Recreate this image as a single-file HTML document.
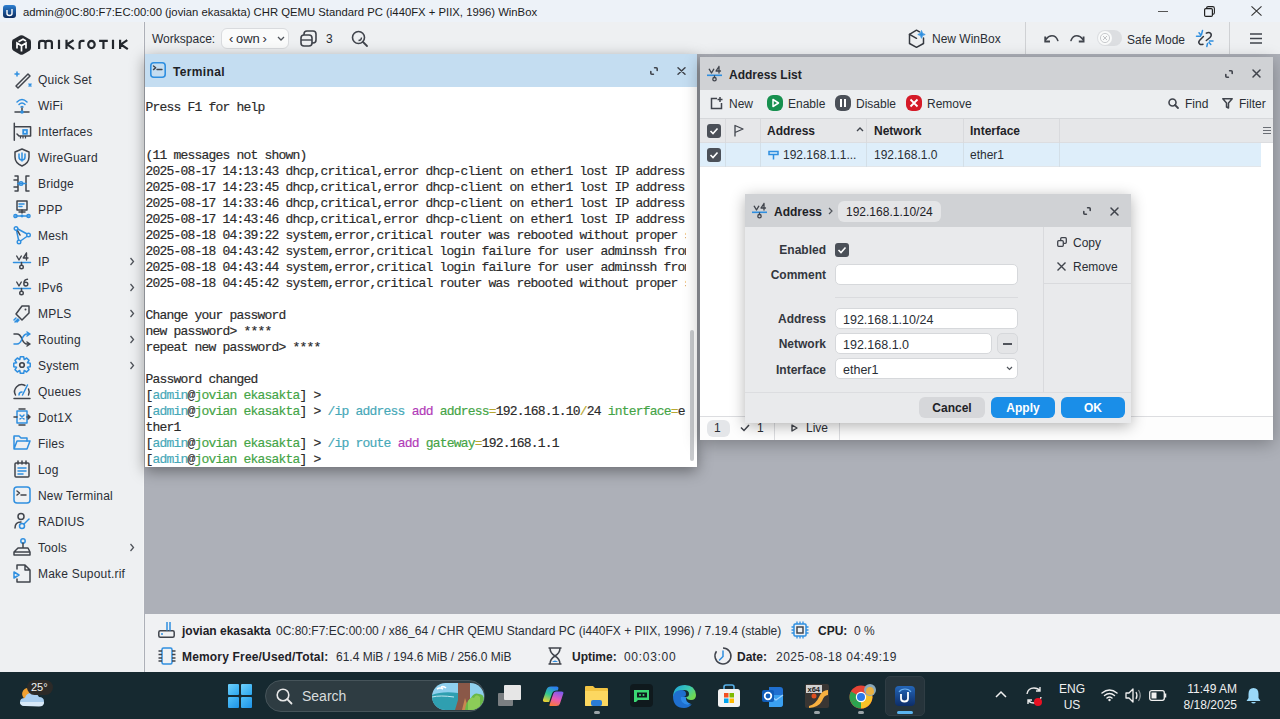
<!DOCTYPE html>
<html><head><meta charset="utf-8">
<style>
*{margin:0;padding:0;box-sizing:border-box}
html,body{width:1280px;height:719px;overflow:hidden;background:#adb0b8;font-family:"Liberation Sans",sans-serif;color:#23272e}
.a{position:absolute}
.t{position:absolute;white-space:nowrap;line-height:12px;font-size:12px;height:12px}
.b{font-weight:bold}
svg{position:absolute;overflow:visible}
.ic{fill:none;stroke:#40444c;stroke-width:1.5;stroke-linecap:round;stroke-linejoin:round}
.bl{fill:none;stroke:#2f8fe0;stroke-width:1.5;stroke-linecap:round;stroke-linejoin:round}
.mono{font-family:"Liberation Mono",monospace;font-size:13px;letter-spacing:-0.8px;line-height:16px;white-space:pre;color:#2b2b2b;-webkit-text-stroke:0.18px currentColor}
</style></head><body>

<div class="a" style="left:0;top:0;width:1280px;height:22px;background:#edf2f8"></div>
<div class="a" style="left:3px;top:5px;width:13px;height:13px;border-radius:3px;background:linear-gradient(#2c7fd2,#0c2a5c)"></div>
<svg style="left:3px;top:5px" width="13" height="13"><path d="M4 5v3.5q0 2 2.5 2q2.5 0 2.5-2V4" stroke="#fff" stroke-width="1.4" fill="none"/></svg>
<div class="t" style="left:23px;top:6px;font-size:11.3px;color:#1c1c1c">admin@0C:80:F7:EC:00:00 (jovian ekasakta) CHR QEMU Standard PC (i440FX + PIIX, 1996) WinBox</div>
<div class="a" style="left:1158px;top:11px;width:10px;height:1px;background:#555"></div>
<svg style="left:1204px;top:6px" width="11" height="11"><rect x="0.6" y="2.6" width="7.8" height="7.8" rx="1.2" fill="none" stroke="#222" stroke-width="1.2"/><path d="M2.6 2.2q0-1.6 1.6-1.6h4.4q1.8 0 1.8 1.8v4.4q0 1.6-1.6 1.6" fill="none" stroke="#222" stroke-width="1.1"/></svg>
<svg style="left:1251px;top:6px" width="11" height="10"><path d="M0.5 0.3l10 9.4M10.5 0.3l-10 9.4" stroke="#333" stroke-width="1.1"/></svg>

<div class="a" style="left:0;top:22px;width:144px;height:650px;background:#eef0f2;border-right:1px solid #f3f4f5"></div>
<svg style="left:12px;top:35px" width="19" height="20" viewBox="0 0 19 20"><path d="M8 0.6Q9.5 -0.2 11 0.6L17.5 4.3Q19 5.2 19 6.9V13.1Q19 14.8 17.5 15.7L11 19.4Q9.5 20.2 8 19.4L1.5 15.7Q0 14.8 0 13.1V6.9Q0 5.2 1.5 4.3z" fill="#262a30"/><path d="M5 13.5V8L9.5 10.8L14 8V13.5M9.5 10.8V16.5M6.5 6.8L11 4.3L14 6" fill="none" stroke="#fff" stroke-width="1.7" stroke-linejoin="miter"/></svg>
<svg style="left:35px;top:36px" width="96" height="16"><path d="M4.1 13.1V7Q4.1 4.85 6.5 4.85H8.1Q10.5 4.85 10.5 7V13.1M10.5 7Q10.5 4.85 12.9 4.85H14.5Q16.9 4.85 16.9 7V13.1M24 3.75V13.1M31.5 3.75V13.1M38.6 4.2L32.2 8.4L38.9 13.1M44.6 13.1V7.3Q44.6 4.85 47.2 4.85H49.5M64.1 4.85H72.8M68.45 4.85V13.1M78 3.75V13.1M85.1 3.75V13.1M92.3 4.2L85.9 8.4L92.8 13.1" fill="none" stroke="#23272d" stroke-width="2.2"/><ellipse cx="56.45" cy="8.45" rx="3.25" ry="3.6" fill="none" stroke="#23272d" stroke-width="2.2"/></svg>
<svg style="left:13px;top:70px" width="18" height="18"><path class="ic" d="M3 17L15 5l2 2L5 19z" transform="translate(0,-1)"/><path class="bl" d="M4 2v4M2 4h4" stroke-width="1.6"/><path class="bl" d="M16 14l2 2M18 14l-2 2" stroke-width="1.4"/></svg>
<div class="t" style="left:38px;top:74px;color:#2a2e35;letter-spacing:0.2px">Quick Set</div>
<svg style="left:13px;top:96px" width="18" height="18"><path class="bl" d="M4 6q5-5 10 0M6 8.5q3-3 6 0M8 11q1-1 2 0"/><path class="ic" d="M9 12v4M2 16h14"/><circle cx="9" cy="16" r="1.8" fill="#2f8fe0"/></svg>
<div class="t" style="left:38px;top:100px;color:#2a2e35;letter-spacing:0.2px">WiFi</div>
<svg style="left:13px;top:122px" width="18" height="18"><path class="ic" d="M1.3 1.2V18.3M1.3 4.7H17.6V14H6L4 12" stroke-linecap="butt"/><path d="M7.5 14v2.5M10 14v2.5M12.5 14v2.5" stroke="#40444c" stroke-width="1.2"/><rect x="9.3" y="7.1" width="5.5" height="5.6" fill="#2f8fe0"/><rect x="11" y="8.8" width="2.1" height="2.2" fill="#bfe0fa"/></svg>
<div class="t" style="left:38px;top:126px;color:#2a2e35;letter-spacing:0.2px">Interfaces</div>
<svg style="left:13px;top:148px" width="18" height="18"><path class="ic" d="M9 1l7 3v5q0 6-7 9q-7-3-7-9V4z"/><path class="bl" d="M6 6v3q0 3 3 3q3 0 3-3V6M9 5v8"/></svg>
<div class="t" style="left:38px;top:152px;color:#2a2e35;letter-spacing:0.2px">WireGuard</div>
<svg style="left:13px;top:174px" width="18" height="18"><path class="ic" d="M2 2h3v15H2M16 2h-3v15h3M1 6h4M1 13h4"/><path class="bl" d="M5 9.5h8"/><circle cx="8" cy="9.5" r="1.8" fill="none" stroke="#2f8fe0" stroke-width="1.4"/></svg>
<div class="t" style="left:38px;top:178px;color:#2a2e35;letter-spacing:0.2px">Bridge</div>
<svg style="left:13px;top:200px" width="18" height="18"><rect class="ic" x="4" y="1" width="10" height="9"/><path class="bl" d="M6 4h5M6 6.5h3"/><path class="ic" d="M9 10v3M6 12h6"/><path class="bl" d="M2 16h14"/><circle cx="2.5" cy="16" r="1.6" fill="none" stroke="#2f8fe0" stroke-width="1.4"/><circle cx="15.5" cy="16" r="1.6" fill="none" stroke="#2f8fe0" stroke-width="1.4"/><circle cx="9" cy="16" r="1.4" fill="#2f8fe0"/></svg>
<div class="t" style="left:38px;top:204px;color:#2a2e35;letter-spacing:0.2px">PPP</div>
<svg style="left:13px;top:226px" width="18" height="18"><path class="bl" d="M3 2l13 7L6 16z"/><path class="ic" d="M3 2l4 7"/><circle cx="3" cy="2.5" r="1.8" fill="#eef0f2" stroke="#2f8fe0" stroke-width="1.4"/><circle cx="15.5" cy="9" r="1.8" fill="#eef0f2" stroke="#2f8fe0" stroke-width="1.4"/><circle cx="6" cy="16" r="1.8" fill="#eef0f2" stroke="#2f8fe0" stroke-width="1.4"/></svg>
<div class="t" style="left:38px;top:230px;color:#2a2e35;letter-spacing:0.2px">Mesh</div>
<svg style="left:13px;top:252px" width="18" height="18"><path d="M3.7 4L6 8L8.3 4M13.5 1V8M13.5 1L10.3 6H15" fill="none" stroke="#40444c" stroke-width="1.4" stroke-linejoin="round" stroke-linecap="round"/><path class="bl" d="M0.5 10.5h17"/><path class="ic" d="M8.5 10.5v2.5"/><circle cx="8.5" cy="15" r="1.8" fill="none" stroke="#40444c" stroke-width="1.4"/></svg>
<div class="t" style="left:38px;top:256px;color:#2a2e35;letter-spacing:0.2px">IP</div>
<svg style="left:129px;top:257px" width="6" height="9"><path d="M1.5 1l3 3.5l-3 3.5" fill="none" stroke="#50545b" stroke-width="1.3"/></svg>
<svg style="left:13px;top:278px" width="18" height="18"><path d="M3.7 4L6 8L8.3 4M14.5 1.3Q11 1.5 10.8 5.5Q10.8 8 12.8 8Q14.8 8 14.8 6Q14.8 4.2 12.8 4.2Q11.3 4.2 10.9 5.3" fill="none" stroke="#40444c" stroke-width="1.4" stroke-linejoin="round" stroke-linecap="round"/><path class="bl" d="M0.5 10.5h17"/><path class="ic" d="M8.5 10.5v2.5"/><circle cx="8.5" cy="15" r="1.8" fill="none" stroke="#40444c" stroke-width="1.4"/></svg>
<div class="t" style="left:38px;top:282px;color:#2a2e35;letter-spacing:0.2px">IPv6</div>
<svg style="left:129px;top:283px" width="6" height="9"><path d="M1.5 1l3 3.5l-3 3.5" fill="none" stroke="#50545b" stroke-width="1.3"/></svg>
<svg style="left:13px;top:304px" width="18" height="18"><path class="ic" d="M9 2h7v7l-7 7l-6-6z"/><circle cx="12.5" cy="5.5" r="1" fill="#40444c"/><path class="bl" d="M1 16l2-2M2 18l3-3M4 18l2-2"/></svg>
<div class="t" style="left:38px;top:308px;color:#2a2e35;letter-spacing:0.2px">MPLS</div>
<svg style="left:129px;top:309px" width="6" height="9"><path d="M1.5 1l3 3.5l-3 3.5" fill="none" stroke="#50545b" stroke-width="1.3"/></svg>
<svg style="left:13px;top:330px" width="18" height="18"><path class="ic" d="M1 4h3q3 0 5 5q2 5 5 5h3M14 12l3 2l-3 2"/><path class="bl" d="M1 14h3q3 0 5-5q2-5 5-5h3M14 2l3 2l-3 2"/></svg>
<div class="t" style="left:38px;top:334px;color:#2a2e35;letter-spacing:0.2px">Routing</div>
<svg style="left:129px;top:335px" width="6" height="9"><path d="M1.5 1l3 3.5l-3 3.5" fill="none" stroke="#50545b" stroke-width="1.3"/></svg>
<svg style="left:13px;top:356px" width="18" height="18"><path class="bl" d="M14.46 6.76L17.23 7.33L17.23 10.67L14.46 11.24L14.44 11.27L16.00 13.64L13.64 16.00L11.27 14.44L11.24 14.46L10.67 17.23L7.33 17.23L6.76 14.46L6.73 14.44L4.36 16.00L2.00 13.64L3.56 11.27L3.54 11.24L0.77 10.67L0.77 7.33L3.54 6.76L3.56 6.73L2.00 4.36L4.36 2.00L6.73 3.56L6.76 3.54L7.33 0.77L10.67 0.77L11.24 3.54L11.27 3.56L13.64 2.00L16.00 4.36L14.44 6.73z"/><circle cx="9" cy="9" r="2.3" fill="none" stroke="#40444c" stroke-width="1.6"/></svg>
<div class="t" style="left:38px;top:360px;color:#2a2e35;letter-spacing:0.2px">System</div>
<svg style="left:129px;top:361px" width="6" height="9"><path d="M1.5 1l3 3.5l-3 3.5" fill="none" stroke="#50545b" stroke-width="1.3"/></svg>
<svg style="left:13px;top:382px" width="18" height="18"><path class="ic" d="M2.5 13A7 7 0 0 1 12 3.5M15.5 7A7 7 0 0 1 15.5 13M1 16.5h16"/><path class="bl" d="M14.5 3l-5 10M6 13q0-3 3-3"/></svg>
<div class="t" style="left:38px;top:386px;color:#2a2e35;letter-spacing:0.2px">Queues</div>
<svg style="left:13px;top:408px" width="18" height="18"><rect class="bl" x="4" y="3" width="10" height="12"/><path class="bl" d="M7 7l4 4M11 7l-4 4"/><path class="ic" d="M1 9h3M14 9h3M15 7l2 2l-2 2M6 1h6M6 17h6"/></svg>
<div class="t" style="left:38px;top:412px;color:#2a2e35;letter-spacing:0.2px">Dot1X</div>
<svg style="left:13px;top:434px" width="18" height="18"><path class="bl" d="M1 4v11h13l3-8H4L1 15"/><path class="bl" d="M1 4V2h5l2 2h6v3"/></svg>
<div class="t" style="left:38px;top:438px;color:#2a2e35;letter-spacing:0.2px">Files</div>
<svg style="left:13px;top:460px" width="18" height="18"><rect class="ic" x="2" y="3" width="14" height="14" rx="1"/><path class="ic" d="M5 1v3M9 1v3M13 1v3"/><path class="bl" d="M5 8h8M5 11h8M5 14h5"/></svg>
<div class="t" style="left:38px;top:464px;color:#2a2e35;letter-spacing:0.2px">Log</div>
<svg style="left:13px;top:486px" width="18" height="18"><rect class="bl" x="1" y="1" width="16" height="16" rx="3"/><path class="ic" d="M4 5l2.5 2L4 9M8 9h5"/></svg>
<div class="t" style="left:38px;top:490px;color:#2a2e35;letter-spacing:0.2px">New Terminal</div>
<svg style="left:13px;top:512px" width="18" height="18"><circle cx="8" cy="4.5" r="3" class="ic"/><path class="ic" d="M2 16q0-6 6-6"/><circle cx="9" cy="14" r="2.5" class="bl"/><path class="bl" d="M11 12l5-5"/></svg>
<div class="t" style="left:38px;top:516px;color:#2a2e35;letter-spacing:0.2px">RADIUS</div>
<svg style="left:13px;top:538px" width="18" height="18"><circle cx="10" cy="3" r="2.2" class="bl"/><path class="ic" d="M10 5v5M5 10h10l2 4H1zM1 14v3h16v-3"/></svg>
<div class="t" style="left:38px;top:542px;color:#2a2e35;letter-spacing:0.2px">Tools</div>
<svg style="left:129px;top:543px" width="6" height="9"><path d="M1.5 1l3 3.5l-3 3.5" fill="none" stroke="#50545b" stroke-width="1.3"/></svg>
<svg style="left:13px;top:564px" width="18" height="18"><path class="ic" d="M4 5V1h8l5 5v12H4v-3M12 1v5h5"/><path class="bl" d="M1 8l5 3l-5 3z"/></svg>
<div class="t" style="left:38px;top:568px;color:#2a2e35;letter-spacing:0.2px">Make Supout.rif</div>

<div class="a" style="left:145px;top:22px;width:1135px;height:32px;background:#eef0f2"></div>
<div class="t" style="left:152px;top:33px;color:#2a2e35">Workspace:</div>
<div class="a" style="left:221px;top:28px;width:68px;height:21px;border-radius:6px;background:#fafbfb;border:1px solid #d9dbde"></div>
<div class="t" style="left:229px;top:33px;color:#2a2e35;font-size:13px">&lsaquo;&#8201;own&#8201;&rsaquo;</div>
<svg style="left:277px;top:36px" width="8" height="5"><path d="M1 1l3 3l3-3" fill="none" stroke="#50545b" stroke-width="1.3"/></svg>
<svg style="left:300px;top:30px" width="18" height="17"><rect x="1" y="5" width="11" height="11" rx="3" fill="none" stroke="#40444c" stroke-width="1.6"/><path d="M4 5V4q0-3 3-3h6q3 0 3 3v6q0 3-3 3h-1" fill="none" stroke="#40444c" stroke-width="1.6"/><path d="M1 10h11" stroke="#40444c" stroke-width="1.4"/></svg>
<div class="t" style="left:326px;top:33px;color:#2a2e35">3</div>
<svg style="left:351px;top:30px" width="17" height="17"><circle cx="7.5" cy="7.5" r="6" fill="none" stroke="#40444c" stroke-width="1.6"/><path d="M12 12l4 4" stroke="#40444c" stroke-width="1.8" stroke-linecap="round"/><path d="M10.5 7.5a3 3 0 0 1-3 3" fill="none" stroke="#40444c" stroke-width="1.3"/></svg>
<!-- right group -->
<svg style="left:900px;top:24px" width="30" height="28"><path d="M19.5 7.8L16.5 6.2L9.5 10.3V19.5L16.5 23.3L23.5 19.5V14" fill="none" stroke="#353940" stroke-width="1.5" stroke-linejoin="round" stroke-linecap="round"/><path d="M9.5 10.3L16.5 14.3" fill="none" stroke="#353940" stroke-width="1.5" stroke-linecap="round"/><path d="M21.5 6.5Q21.8 10.2 25.2 10.5Q21.8 10.8 21.5 14.3Q21.2 10.8 17.8 10.5Q21.2 10.2 21.5 6.5z" fill="#2f8fe0" stroke="#2f8fe0" stroke-width="0.8" stroke-linejoin="round"/></svg>
<div class="t" style="left:932px;top:33px;color:#2a2e35">New WinBox</div>
<div class="a" style="left:1025px;top:22px;width:1px;height:32px;background:#cfd1d4"></div>
<svg style="left:1040px;top:26px" width="60" height="24"><path d="M17.8 14.5Q16 9.8 12 9.8Q8.5 9.8 5.8 13.5" fill="none" stroke="#40444c" stroke-width="1.6" stroke-linecap="round"/><path d="M5.2 10.5v5h4.8" fill="none" stroke="#40444c" stroke-width="1.8" stroke-linejoin="miter"/><path d="M31 14.5Q32.8 9.8 36.8 9.8Q40.3 9.8 43 13.5" fill="none" stroke="#40444c" stroke-width="1.6" stroke-linecap="round"/><path d="M43.6 10.5v5h-4.8" fill="none" stroke="#40444c" stroke-width="1.8" stroke-linejoin="miter"/></svg>
<div class="a" style="left:1097px;top:30px;width:25px;height:16px;border-radius:8px;background:#dcdee1"></div>
<div class="a" style="left:1098px;top:31px;width:14px;height:14px;border-radius:7px;background:#f9fafa"></div>
<svg style="left:1098px;top:31px" width="14" height="14"><circle cx="7" cy="7" r="4.6" fill="none" stroke="#c9cbce" stroke-width="1"/><path d="M5 5l4 4M9 5l-4 4" stroke="#c2c4c7" stroke-width="1"/></svg>
<div class="t" style="left:1127px;top:34px;color:#2a2e35">Safe Mode</div>
<svg style="left:1190px;top:26px" width="30" height="24"><path d="M13.4 10.5L9.5 14.5Q8 16.3 9.5 17.8Q11 19 13 18.3" fill="none" stroke="#353940" stroke-width="1.5" stroke-linecap="round"/><path d="M16.3 7.2Q19 5.5 20.8 7.5Q22 9.5 20 11.5L16.3 14.5" fill="none" stroke="#353940" stroke-width="1.5" stroke-linecap="round"/><path d="M12.5 4.5L11.5 8.5M9 6.8L11 9.2M6.5 10.3H10.5" stroke="#2f8fe0" stroke-width="1.5" stroke-linecap="round"/><path d="M19.5 15H23M19 16.5L20.8 18.5M17.5 17.5L16.8 20.5" stroke="#2f8fe0" stroke-width="1.5" stroke-linecap="round"/></svg>
<div class="a" style="left:1229px;top:22px;width:1px;height:32px;background:#cfd1d4"></div>
<svg style="left:1250px;top:33px" width="12" height="12"><path d="M0 1h12M0 5.5h12M0 10h12" stroke="#40444c" stroke-width="1.4"/></svg>

<div class="a" style="left:145px;top:614px;width:1135px;height:58px;background:#f0f1f3"></div>
<svg style="left:158px;top:621px" width="17" height="17"><rect x="0.8" y="9.8" width="15.4" height="6.4" rx="1.5" fill="none" stroke="#40444c" stroke-width="1.5"/><circle cx="4" cy="13" r="1" fill="#2f8fe0"/><path d="M9 1v8.5M12 1v8.5" stroke="#2f8fe0" stroke-width="1.5"/></svg>
<div class="t b" style="left:182px;top:625px;color:#1e2227">jovian ekasakta</div>
<div class="t" style="left:276px;top:625px;color:#2a2e35">0C:80:F7:EC:00:00 / x86_64 / CHR QEMU Standard PC (i440FX + PIIX, 1996) / 7.19.4 (stable)</div>
<svg style="left:791px;top:621px" width="18" height="18"><rect x="3" y="3" width="12" height="12" rx="1" fill="none" stroke="#2f8fe0" stroke-width="1.5"/><rect x="6" y="6" width="6" height="6" fill="none" stroke="#40444c" stroke-width="1.5"/><path d="M6 0.5v2.5M9 0.5v2.5M12 0.5v2.5M6 15v2.5M9 15v2.5M12 15v2.5M0.5 6h2.5M0.5 9h2.5M0.5 12h2.5M15 6h2.5M15 9h2.5M15 12h2.5" stroke="#2f8fe0" stroke-width="1.3"/></svg>
<div class="t b" style="left:818px;top:625px;color:#1e2227">CPU:</div>
<div class="t" style="left:854px;top:625px;color:#2a2e35">0 %</div>
<svg style="left:158px;top:647px" width="18" height="18"><rect x="4" y="1" width="10" height="16" rx="1.5" fill="none" stroke="#2f8fe0" stroke-width="1.5"/><path d="M0.5 4h3.5M0.5 7.5h3.5M0.5 11h3.5M0.5 14h3.5M14 4h3.5M14 7.5h3.5M14 11h3.5M14 14h3.5" stroke="#40444c" stroke-width="1.4"/></svg>
<div class="t b" style="left:182px;top:651px;color:#1e2227;letter-spacing:0.17px">Memory Free/Used/Total:</div>
<div class="t" style="left:336px;top:651px;color:#2a2e35">61.4 MiB / 194.6 MiB / 256.0 MiB</div>
<svg style="left:548px;top:647px" width="14" height="18"><path d="M0.5 1h13M0.5 17h13" stroke="#40444c" stroke-width="1.5"/><path d="M2 1q0 5 5 8q5 3 5 8M12 1q0 5-5 8q-5 3-5 8" fill="none" stroke="#40444c" stroke-width="1.5"/><path d="M4 15q3-3 6 0z" fill="#2f8fe0"/></svg>
<div class="t b" style="left:572px;top:651px;color:#1e2227">Uptime:</div>
<div class="t" style="left:624px;top:651px;color:#2a2e35;letter-spacing:0.7px">00:03:00</div>
<svg style="left:714px;top:647px" width="18" height="18"><path d="M9 1a8 8 0 1 1-6.5 3.3" fill="none" stroke="#40444c" stroke-width="1.5"/><path d="M9 4v5.5L5.5 13" fill="none" stroke="#2f8fe0" stroke-width="1.5" stroke-linecap="round"/></svg>
<div class="t b" style="left:737px;top:651px;color:#1e2227">Date:</div>
<div class="t" style="left:776px;top:651px;color:#2a2e35;letter-spacing:0.5px">2025-08-18 04:49:19</div>

<div class="a" style="left:145px;top:54px;width:552px;height:413px;background:#fff;box-shadow:0 4px 14px rgba(0,0,0,0.4)"></div>
<div class="a" style="left:145px;top:54px;width:552px;height:33px;background:#c4ddf1"></div>
<svg style="left:150px;top:62px" width="16" height="16"><rect x="0.8" y="0.8" width="14.4" height="14.4" rx="3" fill="none" stroke="#2f8fe0" stroke-width="1.6"/><path d="M3.5 4l2.2 1.8L3.5 7.6M7 7.5h5" fill="none" stroke="#40444c" stroke-width="1.4" stroke-linecap="round" stroke-linejoin="round"/></svg>
<div class="t b" style="left:173px;top:66px;color:#1e2227;letter-spacing:0.35px">Terminal</div>
<svg style="left:650px;top:67px" width="8" height="8"><path d="M4.6 0.8h1.6q1 0 1 1v1.6M3.4 7.2H1.8q-1 0-1-1V4.6" fill="none" stroke="#40444c" stroke-width="1.6" stroke-linecap="round"/></svg>
<svg style="left:677px;top:67px" width="9" height="8"><path d="M1 0.7l7 6.6M8 0.7l-7 6.6" stroke="#40444c" stroke-width="1.5" stroke-linecap="round"/></svg>
<div class="a" style="left:146px;top:87px;width:540px;height:380px;overflow:hidden"><div class="mono a" style="left:-0.5px;top:13px">Press F1 for help


(11 messages not shown)
2025-08-17 14:13:43 dhcp,critical,error dhcp-client on ether1 lost IP address
2025-08-17 14:23:45 dhcp,critical,error dhcp-client on ether1 lost IP address
2025-08-17 14:33:46 dhcp,critical,error dhcp-client on ether1 lost IP address
2025-08-17 14:43:46 dhcp,critical,error dhcp-client on ether1 lost IP address
2025-08-18 04:39:22 system,error,critical router was rebooted without proper shutdown
2025-08-18 04:43:42 system,error,critical login failure for user adminssh from 192.168.1.5
2025-08-18 04:43:44 system,error,critical login failure for user adminssh from 192.168.1.5
2025-08-18 04:45:42 system,error,critical router was rebooted without proper shutdown

Change your password
new password&gt; ****
repeat new password&gt; ****

Password changed
[<span style="color:#46a8b8">admin</span>@<span style="color:#44a446">jovian ekasakta</span>] &gt; 
[<span style="color:#46a8b8">admin</span>@<span style="color:#44a446">jovian ekasakta</span>] &gt; <span style="color:#46a8b8">/ip address</span> <span style="color:#b13bb8">add</span> <span style="color:#44a446">address</span><span style="color:#b9a830">=</span>192.168.1.10<span style="color:#b9a830">/</span>24 <span style="color:#44a446">interface</span><span style="color:#b9a830">=</span>e
ther1
[<span style="color:#46a8b8">admin</span>@<span style="color:#44a446">jovian ekasakta</span>] &gt; <span style="color:#46a8b8">/ip route</span> <span style="color:#b13bb8">add</span> <span style="color:#44a446">gateway</span><span style="color:#b9a830">=</span>192.168.1.1
[<span style="color:#46a8b8">admin</span>@<span style="color:#44a446">jovian ekasakta</span>] &gt; </div></div>
<div class="a" style="left:690px;top:330px;width:4px;height:131px;border-radius:2px;background:#c8cacd"></div>

<div class="a" style="left:700px;top:57px;width:573px;height:383px;background:#fff;box-shadow:0 4px 16px rgba(0,0,0,0.28)"></div>
<div class="a" style="left:700px;top:57px;width:573px;height:33px;background:#d0d2d5"></div>
<svg style="left:707px;top:66px" width="16" height="16"><path d="M2.2 3.2L4.5 7L6.8 3.2M12 0.5V7M12 0.5L9 5H13.5" fill="none" stroke="#40444c" stroke-width="1.3" stroke-linejoin="round" stroke-linecap="round"/><path d="M0 9.3h15" stroke="#2f8fe0" stroke-width="1.6"/><path d="M7.5 9.3v2" stroke="#40444c" stroke-width="1.3"/><circle cx="7.5" cy="13.2" r="1.7" fill="none" stroke="#40444c" stroke-width="1.3"/></svg>
<div class="t b" style="left:729px;top:69px;color:#1e2227">Address List</div>
<svg style="left:1225px;top:70px" width="8" height="8"><path d="M4.6 0.8h1.6q1 0 1 1v1.6M3.4 7.2H1.8q-1 0-1-1V4.6" fill="none" stroke="#40444c" stroke-width="1.6" stroke-linecap="round"/></svg>
<svg style="left:1252px;top:69px" width="9" height="9"><path d="M1 1l7 7M8 1l-7 7" stroke="#40444c" stroke-width="1.5" stroke-linecap="round"/></svg>
<!-- toolbar -->
<div class="a" style="left:700px;top:90px;width:573px;height:29px;background:#eceef0;border-bottom:1px solid #d6d8db"></div>
<svg style="left:710px;top:97px" width="13" height="13"><path d="M7 1.5H1.5v10h10V6" fill="none" stroke="#40444c" stroke-width="1.5"/><path d="M10 0v5M7.5 2.5h5" stroke="#40444c" stroke-width="1.5"/></svg>
<div class="t" style="left:729px;top:98px;color:#2a2e35">New</div>
<div class="a" style="left:767px;top:95px;width:16px;height:16px;border-radius:6px;background:#17904f"></div>
<svg style="left:767px;top:95px" width="16" height="16"><path d="M6 4.5v7l5.5-3.5z" fill="none" stroke="#fff" stroke-width="1.5" stroke-linejoin="round"/></svg>
<div class="t" style="left:788px;top:98px;color:#2a2e35">Enable</div>
<div class="a" style="left:835px;top:95px;width:16px;height:16px;border-radius:6px;background:#4b5058"></div>
<div class="a" style="left:840px;top:99px;width:2px;height:8px;background:#fff"></div>
<div class="a" style="left:844px;top:99px;width:2px;height:8px;background:#fff"></div>
<div class="t" style="left:856px;top:98px;color:#2a2e35">Disable</div>
<div class="a" style="left:906px;top:95px;width:16px;height:16px;border-radius:6px;background:#d51a28"></div>
<svg style="left:906px;top:95px" width="16" height="16"><path d="M4.5 4.5l7 7M11.5 4.5l-7 7" stroke="#fff" stroke-width="1.8"/></svg>
<div class="t" style="left:927px;top:98px;color:#2a2e35">Remove</div>
<svg style="left:1168px;top:98px" width="11" height="11"><circle cx="4.5" cy="4.5" r="3.5" fill="none" stroke="#40444c" stroke-width="1.6"/><path d="M7 7l3 3" stroke="#40444c" stroke-width="1.8" stroke-linecap="round"/></svg>
<div class="t" style="left:1185px;top:98px;color:#2a2e35">Find</div>
<svg style="left:1222px;top:98px" width="11" height="11"><path d="M0.8 0.8h9.4L6.5 5v5L4.5 9V5z" fill="none" stroke="#40444c" stroke-width="1.5" stroke-linejoin="round"/></svg>
<div class="t" style="left:1239px;top:98px;color:#2a2e35">Filter</div>
<!-- header -->
<div class="a" style="left:700px;top:119px;width:573px;height:24px;background:#e6e7e9;border-bottom:1px solid #dcdde0"></div>
<div class="a" style="left:725px;top:119px;width:1px;height:48px;background:#d9dadd"></div>
<div class="a" style="left:760px;top:119px;width:1px;height:48px;background:#d9dadd"></div>
<div class="a" style="left:866px;top:119px;width:1px;height:48px;background:#d9dadd"></div>
<div class="a" style="left:963px;top:119px;width:1px;height:48px;background:#d9dadd"></div>
<div class="a" style="left:1059px;top:119px;width:1px;height:48px;background:#d9dadd"></div>
<div class="a" style="left:707px;top:124px;width:14px;height:14px;border-radius:3px;background:#4b5058"></div>
<svg style="left:707px;top:124px" width="14" height="14"><path d="M3.5 7l2.5 2.5l4.5-5" fill="none" stroke="#fff" stroke-width="1.6"/></svg>
<svg style="left:734px;top:124px" width="10" height="13"><path d="M1 12.5V1.5h0l8 3.5l-8 3.5" fill="none" stroke="#40444c" stroke-width="1.3" stroke-linejoin="round"/></svg>
<div class="t b" style="left:767px;top:125px;color:#1e2227">Address</div>
<svg style="left:856px;top:127px" width="8" height="5"><path d="M1 4l3-3l3 3" fill="none" stroke="#40444c" stroke-width="1.4"/></svg>
<div class="t b" style="left:874px;top:125px;color:#1e2227">Network</div>
<div class="t b" style="left:970px;top:125px;color:#1e2227">Interface</div>
<svg style="left:1263px;top:127px" width="8" height="7"><path d="M0 0.5h8M0 3.5h8M0 6.5h8" stroke="#6a6e75" stroke-width="1"/></svg>
<!-- row -->
<div class="a" style="left:700px;top:143px;width:561px;height:24px;background:#deeefa;border-bottom:1px solid #e2e6ea"></div>
<div class="a" style="left:725px;top:143px;width:1px;height:24px;background:#d3dfe8"></div>
<div class="a" style="left:760px;top:143px;width:1px;height:24px;background:#d3dfe8"></div>
<div class="a" style="left:866px;top:143px;width:1px;height:24px;background:#d3dfe8"></div>
<div class="a" style="left:963px;top:143px;width:1px;height:24px;background:#d3dfe8"></div>
<div class="a" style="left:1059px;top:143px;width:1px;height:24px;background:#d3dfe8"></div>
<div class="a" style="left:707px;top:148px;width:14px;height:14px;border-radius:3px;background:#4b5058"></div>
<svg style="left:707px;top:148px" width="14" height="14"><path d="M3.5 7l2.5 2.5l4.5-5" fill="none" stroke="#fff" stroke-width="1.6"/></svg>
<svg style="left:768px;top:150px" width="11" height="10"><path d="M1 1.5h9v3H1zM5.5 4.5v5" fill="none" stroke="#2f8fe0" stroke-width="1.5"/></svg>
<div class="t" style="left:783px;top:149px;color:#2a2e35">192.168.1.1...</div>
<div class="t" style="left:874px;top:149px;color:#2a2e35">192.168.1.0</div>
<div class="t" style="left:970px;top:149px;color:#2a2e35">ether1</div>
<!-- footer -->
<div class="a" style="left:700px;top:416px;width:573px;height:24px;background:#fdfdfd;border-top:1px solid #dcdde0"></div>
<div class="a" style="left:707px;top:420px;width:23px;height:17px;border-radius:6px;background:#e4e6e9"></div>
<div class="t" style="left:714px;top:422px;color:#2a2e35">1</div>
<svg style="left:740px;top:424px" width="10" height="8"><path d="M1 3.5l3 3l5-5.5" fill="none" stroke="#40444c" stroke-width="1.5"/></svg>
<div class="t" style="left:757px;top:422px;color:#2a2e35">1</div>
<div class="a" style="left:774px;top:417px;width:1px;height:23px;background:#dcdde0"></div>
<svg style="left:791px;top:424px" width="7" height="8"><path d="M1 1v6l5-3z" fill="none" stroke="#40444c" stroke-width="1.4" stroke-linejoin="round"/></svg>
<div class="t" style="left:806px;top:422px;color:#2a2e35">Live</div>
<div class="a" style="left:839px;top:417px;width:1px;height:23px;background:#dcdde0"></div>

<div class="a" style="left:745px;top:194px;width:386px;height:229px;background:#e9eaec;box-shadow:0 3px 14px rgba(0,0,0,0.3)"></div>
<div class="a" style="left:745px;top:194px;width:386px;height:33px;background:#d0d2d5"></div>
<svg style="left:752px;top:203px" width="16" height="16"><path d="M2.2 3.2L4.5 7L6.8 3.2M12 0.5V7M12 0.5L9 5H13.5" fill="none" stroke="#40444c" stroke-width="1.3" stroke-linejoin="round" stroke-linecap="round"/><path d="M0 9.3h15" stroke="#2f8fe0" stroke-width="1.6"/><path d="M7.5 9.3v2" stroke="#40444c" stroke-width="1.3"/><circle cx="7.5" cy="13.2" r="1.7" fill="none" stroke="#40444c" stroke-width="1.3"/></svg>
<div class="t b" style="left:774px;top:206px;color:#1e2227">Address</div>
<svg style="left:828px;top:207px" width="5" height="8"><path d="M1 1l3 3l-3 3" fill="none" stroke="#50545b" stroke-width="1.2"/></svg>
<div class="a" style="left:838px;top:201px;width:103px;height:21px;border-radius:6px;background:#e4e5e7"></div>
<div class="t" style="left:846px;top:206px;color:#1e2227">192.168.1.10/24</div>
<svg style="left:1083px;top:207px" width="8" height="8"><path d="M4.6 0.8h1.6q1 0 1 1v1.6M3.4 7.2H1.8q-1 0-1-1V4.6" fill="none" stroke="#40444c" stroke-width="1.6" stroke-linecap="round"/></svg>
<svg style="left:1110px;top:207px" width="9" height="9"><path d="M1 1l7 7M8 1l-7 7" stroke="#40444c" stroke-width="1.5" stroke-linecap="round"/></svg>
<!-- side panel -->
<div class="a" style="left:1043px;top:227px;width:1px;height:165px;background:#d9dadd"></div>
<div class="a" style="left:1044px;top:283px;width:87px;height:1px;background:#d9dadd"></div>
<svg style="left:1057px;top:237px" width="10" height="10"><rect x="0.7" y="3.7" width="5.6" height="5.6" rx="1" fill="none" stroke="#40444c" stroke-width="1.3"/><path d="M3.7 3.2V1.7q0-1 1-1h3.6q1 0 1 1v3.6q0 1-1 1H6.8" fill="none" stroke="#40444c" stroke-width="1.3"/></svg>
<div class="t" style="left:1073px;top:237px;color:#2a2e35">Copy</div>
<svg style="left:1057px;top:262px" width="9" height="9"><path d="M0.5 0.5l8 8M8.5 0.5l-8 8" stroke="#40444c" stroke-width="1.4"/></svg>
<div class="t" style="left:1073px;top:261px;color:#2a2e35">Remove</div>
<!-- form -->
<div class="t" style="left:726px;width:100px;text-align:right;font-weight:bold;color:#33373e;top:244px">Enabled</div>
<div class="a" style="left:835px;top:243px;width:14px;height:14px;border-radius:3px;background:#4b5058"></div>
<svg style="left:835px;top:243px" width="14" height="14"><path d="M3.5 7l2.5 2.5l4.5-5" fill="none" stroke="#fff" stroke-width="1.6"/></svg>
<div class="t" style="left:726px;width:100px;text-align:right;font-weight:bold;color:#33373e;top:269px">Comment</div>
<div class="a" style="left:835px;top:264px;width:183px;height:21px;border-radius:5px;background:#fff;border:1px solid #d6d8db"></div>
<div class="a" style="left:835px;top:297px;width:183px;height:1px;background:#dadbde"></div>
<div class="t" style="left:726px;width:100px;text-align:right;font-weight:bold;color:#33373e;top:313px">Address</div>
<div class="a" style="left:835px;top:308px;width:183px;height:21px;border-radius:5px;background:#fff;border:1px solid #d6d8db"></div>
<div class="t" style="left:843px;top:314px;color:#2a2e35;font-size:12.5px">192.168.1.10/24</div>
<div class="t" style="left:726px;width:100px;text-align:right;font-weight:bold;color:#33373e;top:338px">Network</div>
<div class="a" style="left:835px;top:333px;width:157px;height:21px;border-radius:5px;background:#fff;border:1px solid #d6d8db"></div>
<div class="t" style="left:843px;top:339px;color:#2a2e35;font-size:12.5px">192.168.1.0</div>
<div class="a" style="left:997px;top:333px;width:21px;height:21px;border-radius:5px;background:#e4e5e7;border:1px solid #d6d8db"></div>
<div class="a" style="left:1003px;top:343px;width:9px;height:2px;background:#50545b"></div>
<div class="t" style="left:726px;width:100px;text-align:right;font-weight:bold;color:#33373e;top:364px">Interface</div>
<div class="a" style="left:835px;top:358px;width:183px;height:21px;border-radius:5px;background:#fff;border:1px solid #d6d8db"></div>
<div class="t" style="left:843px;top:364px;color:#2a2e35;font-size:12.5px">ether1</div>
<svg style="left:1006px;top:366px" width="7" height="5"><path d="M1 1l2.5 2.5l2.5-2.5" fill="none" stroke="#50545b" stroke-width="1.2"/></svg>
<!-- footer -->
<div class="a" style="left:745px;top:392px;width:386px;height:1px;background:#dcdde0"></div>
<div class="a" style="left:919px;top:397px;width:66px;height:21px;border-radius:6px;background:#d6d7da"></div>
<div class="t b" style="left:919px;width:66px;text-align:center;top:402px;color:#1e2227">Cancel</div>
<div class="a" style="left:991px;top:397px;width:64px;height:21px;border-radius:6px;background:#1a8ee8"></div>
<div class="t b" style="left:991px;width:64px;text-align:center;top:402px;color:#fff">Apply</div>
<div class="a" style="left:1061px;top:397px;width:64px;height:21px;border-radius:6px;background:#1a8ee8"></div>
<div class="t b" style="left:1061px;width:64px;text-align:center;top:402px;color:#fff">OK</div>

<div class="a" style="left:0;top:672px;width:1280px;height:47px;background:#162930"></div>
<!-- weather -->
<svg style="left:18px;top:682px" width="32" height="28"><path d="M9 6a6 6 0 1 0 7 7" fill="#f0a030"/><path d="M7 24q-5 0-5-4q0-4 5-4q1-5 7-5q5 0 7 4q5 0 5 4.5q0 4.5-5 4.5z" fill="#a9cdee"/><path d="M7 24q-5 0-5-4h24q0 4.5-5 4.5z" fill="#d8e9f8"/></svg>
<div class="a" style="left:27px;top:680px;width:26px;height:15px;border-radius:8px;background:#2c2a28"></div>
<div class="t" style="left:31px;top:681px;font-size:11px;color:#f2f2f2">25°</div>
<!-- windows logo -->
<div class="a" style="left:228px;top:684px;width:11px;height:11px;background:linear-gradient(135deg,#6fd0fb,#2aa6ef);border-radius:1px"></div>
<div class="a" style="left:241px;top:684px;width:11px;height:11px;background:linear-gradient(135deg,#6fd0fb,#2aa6ef);border-radius:1px"></div>
<div class="a" style="left:228px;top:697px;width:11px;height:11px;background:linear-gradient(135deg,#4fc0f8,#1d93e8);border-radius:1px"></div>
<div class="a" style="left:241px;top:697px;width:11px;height:11px;background:linear-gradient(135deg,#4fc0f8,#1d93e8);border-radius:1px"></div>
<!-- search -->
<div class="a" style="left:265px;top:680px;width:220px;height:32px;border-radius:16px;background:#2e3c42;border:1px solid #46545a"></div>
<svg style="left:276px;top:688px" width="17" height="17"><circle cx="7" cy="7" r="5.8" fill="none" stroke="#e8e8e8" stroke-width="1.6"/><path d="M11.2 11.2l4.3 4.3" stroke="#e8e8e8" stroke-width="1.8" stroke-linecap="round"/></svg>
<div class="t" style="left:302px;top:689px;font-size:14px;line-height:14px;height:14px;color:#d8dcde">Search</div>
<svg style="left:432px;top:683px" width="52" height="27"><defs><clipPath id="pc"><rect x="0" y="0" width="52" height="27" rx="13.5"/></clipPath></defs><g clip-path="url(#pc)"><rect width="52" height="27" fill="#8fd0ee"/><path d="M0 12q10-4 26-2v17H0z" fill="#2f9fb0"/><path d="M0 14q8-2 22 0" stroke="#bfe6f0" stroke-width="1" fill="none"/><path d="M26 0h12v27H23l3-10z" fill="#8a5848"/><path d="M30 27l3-12l4 12z" fill="#c88850"/><path d="M33 27q1-9 6-12q3-6 8-4q5 0 5 6v10z" fill="#6ab848"/><path d="M36 18q3-5 6-3q2-5 6-1v13H36z" fill="#8ccc58"/><path d="M5 6q3-2 6 0M9 4q3-1 5 1" stroke="#fff" stroke-width="1.6" fill="none"/></g></svg>
<!-- task view -->
<div class="a" style="left:498px;top:693px;width:15px;height:13px;background:#7a7f82;border-radius:1px"></div>
<div class="a" style="left:504px;top:685px;width:17px;height:15px;background:#e6e6e6;border-radius:1px"></div>
<!-- copilot -->
<svg style="left:542px;top:686px" width="23" height="21"><defs><linearGradient id="cpa" x1="0.6" y1="0" x2="0.2" y2="1"><stop offset="0" stop-color="#2b7ff0"/><stop offset="0.5" stop-color="#30c890"/><stop offset="1" stop-color="#f0d030"/></linearGradient><linearGradient id="cpb" x1="0.6" y1="0" x2="0.3" y2="1"><stop offset="0" stop-color="#7a5cf0"/><stop offset="0.5" stop-color="#e55ab8"/><stop offset="1" stop-color="#fa7a30"/></linearGradient></defs><path d="M9 0.5H14.5Q17 0.5 16.3 3L12.5 13.5Q11.5 16 9 16H3Q0.3 16 1.1 13.3L4.5 3.5Q5.5 0.5 9 0.5z" fill="url(#cpa)"/><path d="M14 5H19.5Q22.7 5 21.8 8L18.5 18Q17.6 20.7 14.5 20.7H8.8Q6.2 20.7 7 18.2L10.8 7.3Q11.6 5 14 5z" fill="url(#cpb)" stroke="#162930" stroke-width="1.2"/></svg>
<!-- explorer -->
<svg style="left:584px;top:685px" width="25" height="22"><path d="M1 2q0-1 1-1h7l2 2h12q1 0 1 1v16q0 1-1 1H2q-1 0-1-1z" fill="#f2c443"/><path d="M1 6h23v14q0 1-1 1H2q-1 0-1-1z" fill="#fcd760"/><rect x="7" y="15" width="11" height="6" rx="2" fill="#2a7bd5"/></svg>
<div class="a" style="left:594px;top:711px;width:6px;height:3px;border-radius:2px;background:#9aa3a8"></div>
<!-- terminal green -->
<div class="a" style="left:630px;top:684px;width:23px;height:23px;border-radius:4px;background:#0f191d"></div>
<svg style="left:630px;top:684px" width="23" height="23"><path d="M4 6h15v10H8l-2 2H4z" fill="#3bd874"/><rect x="7" y="8.5" width="10" height="5" fill="#0f191d"/><circle cx="10" cy="11" r="1" fill="#3bd874"/><circle cx="13.5" cy="11" r="1" fill="#3bd874"/></svg>
<!-- edge -->
<svg style="left:672px;top:684px" width="25" height="25"><defs><linearGradient id="edg" x1="0" y1="0" x2="1" y2="0.6"><stop offset="0" stop-color="#1a9fe0"/><stop offset="0.6" stop-color="#3cc8b0"/><stop offset="1" stop-color="#70d850"/></linearGradient></defs><path d="M1 12Q2 1 13 1q10 0 11 10q0 5-5 5q-4 0-5-3q3 0 3-3q0-4-5-4q-6 0-8 6z" fill="url(#edg)"/><path d="M1 12q2-6 8-6q5 0 5 4q0 3-3 3q-1 5 5 7q2 1 4 0q-3 4-8 4Q1 24 1 12z" fill="#1f6fcf"/><path d="M14 13q-1 5 5 7q-5 2-9-2q-2-3-1-5z" fill="#2d8ae8"/></svg>
<!-- store -->
<svg style="left:717px;top:684px" width="24" height="24"><path d="M7 5V3q0-2 2-2h6q2 0 2 2v2" fill="none" stroke="#57b0e8" stroke-width="1.6"/><rect x="1" y="5" width="22" height="18" rx="2.5" fill="#f3f3f3"/><rect x="7" y="9" width="4.5" height="4.5" fill="#f25022"/><rect x="12.5" y="9" width="4.5" height="4.5" fill="#7fba00"/><rect x="7" y="14.5" width="4.5" height="4.5" fill="#00a4ef"/><rect x="12.5" y="14.5" width="4.5" height="4.5" fill="#ffb900"/></svg>
<!-- outlook -->
<svg style="left:761px;top:684px" width="25" height="24"><path d="M8 3h11q3 0 3 3v14q0 3-3 3H8z" fill="#1f6fd0"/><path d="M8 11l14 0v9q0 3-3 3H8z" fill="#3aa0f0"/><path d="M8 11l7 5l7-5" fill="none" stroke="#9ad0ff" stroke-width="1.2"/><rect x="1" y="6" width="12" height="12" rx="2" fill="#0f5cb8"/><circle cx="7" cy="12" r="3.3" fill="none" stroke="#fff" stroke-width="1.8"/></svg>
<!-- x64 app -->
<svg style="left:805px;top:684px" width="24" height="24"><rect width="24" height="24" rx="2" fill="#3a3633"/><path d="M4 22q7-2 10-9q3-7 9-7v5q-4 0-6 6q-3 6-13 7z" fill="#f8b040"/><rect x="1" y="1" width="16" height="8" fill="#d0d0d0"/><text x="2.5" y="8" font-size="7.5" font-weight="bold" fill="#222" font-family="Liberation Sans">x64</text><circle cx="9" cy="12" r="2.5" fill="#e05020"/></svg>
<div class="a" style="left:814px;top:711px;width:6px;height:3px;border-radius:2px;background:#9aa3a8"></div>
<!-- chrome -->
<svg style="left:849px;top:684px" width="30" height="26"><circle cx="12" cy="13" r="11.5" fill="#e64435"/><path d="M12 13L2 18.5A11.5 11.5 0 0 0 12 24.5z" fill="#2ca450"/><path d="M12 13L2 18.5A11.5 11.5 0 0 1 2 7.5L12 13" fill="#2ca450"/><path d="M12 13l10-5.5a11.5 11.5 0 0 1-10 17z" fill="#f8c228"/><circle cx="12" cy="13" r="5.2" fill="#fff"/><circle cx="12" cy="13" r="4" fill="#2b79e8"/><circle cx="21" cy="6" r="6" fill="#8aa8b8"/><path d="M17 8q0-5 4-5q4 0 4 5q0 3-4 3q-4 0-4-3z" fill="#e8b040"/></svg>
<div class="a" style="left:858px;top:711px;width:6px;height:3px;border-radius:2px;background:#9aa3a8"></div>
<!-- winbox active -->
<div class="a" style="left:885px;top:676px;width:40px;height:40px;border-radius:5px;background:#26343b;border:1px solid #2f3d44"></div>
<div class="a" style="left:895px;top:686px;width:20px;height:20px;border-radius:4px;background:linear-gradient(#2466b8,#0d2d68)"></div>
<svg style="left:895px;top:686px" width="20" height="20"><path d="M6 8v4.5q0 3 3.5 3q3.5 0 3.5-3V6" stroke="#fff" stroke-width="1.8" fill="none"/><path d="M4 6q2-3 6-3q4 0 6 3" stroke="#6ab0f0" stroke-width="1.2" fill="none"/></svg>
<div class="a" style="left:897px;top:711px;width:16px;height:3px;border-radius:2px;background:#5ab4f0"></div>
<!-- tray -->
<svg style="left:995px;top:691px" width="12" height="7"><path d="M1 6l5-5l5 5" fill="none" stroke="#f0f0f0" stroke-width="1.5"/></svg>
<svg style="left:1024px;top:686px" width="20" height="20"><path d="M3 8q1-6 7-6q4 0 6 3M16 1v4h-4M17 11q-1 6-7 6q-4 0-6-3M4 18v-4h4" fill="none" stroke="#e8e8e8" stroke-width="1.4"/><circle cx="14" cy="16" r="4" fill="#e81123"/></svg>
<div class="t" style="left:1050px;width:44px;text-align:center;top:683px;font-size:12px;color:#f0f0f0">ENG</div>
<div class="t" style="left:1050px;width:44px;text-align:center;top:699px;font-size:12px;color:#f0f0f0">US</div>
<svg style="left:1101px;top:688px" width="17" height="13"><path d="M1 5q7.5-6 15 0M3.5 7.5q5-4 10 0M6 10q2.5-2 5 0" fill="none" stroke="#f0f0f0" stroke-width="1.5" stroke-linecap="round"/><circle cx="8.5" cy="12" r="1.2" fill="#f0f0f0"/></svg>
<svg style="left:1125px;top:688px" width="17" height="15"><path d="M1 5h3l4-4v13l-4-4H1z" fill="none" stroke="#f0f0f0" stroke-width="1.3" stroke-linejoin="round"/><path d="M11 4q2 3.5 0 7" fill="none" stroke="#f0f0f0" stroke-width="1.2"/><path d="M13.5 2q3.5 5.5 0 11" fill="none" stroke="#8a9296" stroke-width="1.2"/></svg>
<svg style="left:1149px;top:690px" width="18" height="11"><rect x="0.7" y="0.7" width="14.6" height="9.6" rx="2" fill="none" stroke="#f0f0f0" stroke-width="1.3"/><rect x="2.5" y="2.5" width="5" height="6" fill="#f0f0f0"/><path d="M16.5 3.5v4" stroke="#f0f0f0" stroke-width="1.5"/></svg>
<div class="t" style="left:1137px;width:100px;text-align:right;top:683px;font-size:12px;color:#f0f0f0">11:49 AM</div>
<div class="t" style="left:1137px;width:100px;text-align:right;top:699px;font-size:12px;color:#f0f0f0">8/18/2025</div>
<svg style="left:1246px;top:687px" width="15" height="17"><path d="M7.5 1q5 0 5 6v4l2 3H0.5l2-3V7q0-6 5-6z" fill="#9ad8f8"/><path d="M5 15q2.5 3 5 0z" fill="#9ad8f8"/></svg>

</body></html>
